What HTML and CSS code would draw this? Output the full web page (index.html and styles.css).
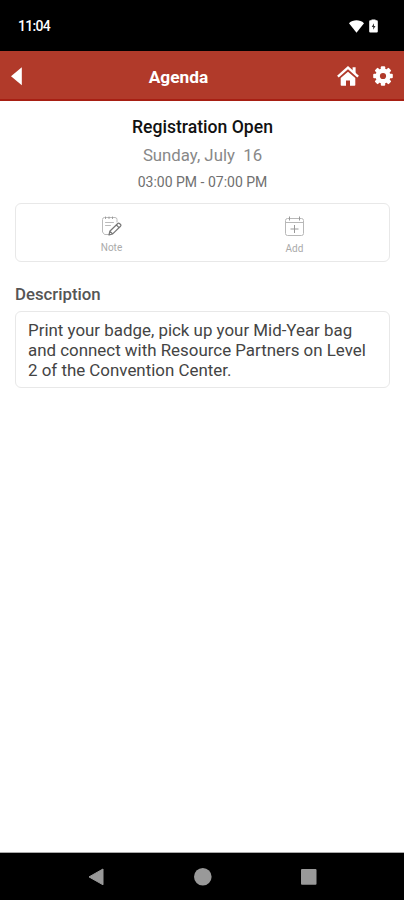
FILE: index.html
```html
<!DOCTYPE html>
<html lang="en">
<head>
  <meta charset="UTF-8" />
  <meta name="viewport" content="width=device-width, initial-scale=1.0" />
  <title>Agenda</title>
  <link rel="stylesheet" href="styles.css">
</head>
<body>
  <div class="status-bar">
    <span class="clock">11:04</span>
    <svg class="wifi" width="15" height="13" viewBox="0 0 15 13"><path d="M0 3.2C4.2-.6 10.8-.6 15 3.2L7.5 12.7z" fill="#fff"/></svg>
    <svg class="battery" width="9" height="14" viewBox="0 0 9 14"><path d="M2.5 1.3V.5h4v.8h1.2q1.1 0 1.1 1.1v10q0 1.1-1.1 1.1H1.3Q.2 13.5.2 12.4v-10q0-1.1 1.1-1.1z" fill="#fff"/><path d="M5 4.2 2.7 8h1.500v2.800L6.500 7H5z" fill="#333"/></svg>
  </div>

  <header class="header">
    <svg class="back" width="12" height="20" viewBox="0 0 12 20"><path d="M11.8 1.3v18L1 10.3z" fill="#fff"/></svg>
    <h1>Agenda</h1>
    <svg class="home" width="22" height="20" viewBox="0 0 22 20">
      <path d="M11 5.800 18.300 12V19q0 .8-.8.8H13v-5.300H9v5.300H4.500q-.8 0-.8-.8v-7z" fill="#fff"/>
      <path d="M.9 10.700 11 1.700l10.100 9" fill="none" stroke="#fff" stroke-width="2.400"/>
      <path d="M15.600 1.200h3v7l-3-2.700z" fill="#fff"/>
    </svg>
    <svg class="gear" width="20" height="20" viewBox="-10 -10 20 20">
      <g fill="#fff">
        <rect x="-2.200" y="-9.800" width="4.400" height="19.600" rx="1"/>
        <rect x="-2.200" y="-9.800" width="4.400" height="19.600" rx="1" transform="rotate(45)"/>
        <rect x="-2.200" y="-9.800" width="4.400" height="19.600" rx="1" transform="rotate(90)"/>
        <rect x="-2.200" y="-9.800" width="4.400" height="19.600" rx="1" transform="rotate(135)"/>
        <circle r="7.500"/>
      </g>
      <circle r="3.100" fill="#b13a2a"/>
    </svg>
  </header>

  <main class="content">
    <h2 class="title">Registration Open</h2>
    <p class="date">Sunday, July&nbsp; 16</p>
    <p class="time">03:00 PM - 07:00 PM</p>

    <div class="actions">
      <div class="action note">
        <svg width="21" height="21" viewBox="0 0 21 21" fill="none" stroke-linecap="round" stroke-linejoin="round">
          <path d="M8 18.500H3.500L1.500 16V3.500q0-2 2-2h10.500q2 0 2 2V6" stroke="#bbb"/>
          <path d="M4.500 1v1.500M8 1v1.500M11.500 1v1.500" stroke="#999"/>
          <path d="M4.500 6.500h8M4.500 9.500h5" stroke="#bbb"/>
          <path d="m8 19 .8-3.700 8-7.800q.8-.8 1.700 0l1 1q.8.8 0 1.700l-7.800 7.700zM15.400 9l2.600 2.600M8.800 15.300l2.900 2.600" stroke="#777" stroke-width="1.200"/>
        </svg>
        <span>Note</span>
      </div>
      <div class="action add">
        <svg width="21" height="21" viewBox="0 0 21 21" fill="none" stroke="#b8b8b8">
          <rect x="1.500" y="2.500" width="18" height="17" rx="2"/>
          <path d="M1.500 6.500h18"/>
          <path d="M5.500.5v4M15.500.5v4M10.500 9v8M6.500 13h8" stroke="#999"/>
        </svg>
        <span>Add</span>
      </div>
    </div>

    <h3 class="label">Description</h3>
    <div class="description">Print your badge, pick up your Mid-Year bag<br>and connect with Resource Partners on Level<br>2 of the Convention Center.</div>
  </main>

  <nav class="nav-bar">
    <svg width="18" height="20" viewBox="0 0 18 20"><path d="M16 2v15.800L2 9.900z" fill="#999" stroke="#999" stroke-linejoin="round"/></svg>
    <svg width="18" height="20" viewBox="0 0 18 20"><circle cx="8.800" cy="9.800" r="8.800" fill="#999"/></svg>
    <svg width="18" height="20" viewBox="0 0 18 20"><rect x="1" y="2" width="15.500" height="15.800" rx="1" fill="#999"/></svg>
  </nav>
</body>
</html>
```
FILE: styles.css
```css
* {
  box-sizing: border-box;
}
body {
  font-family: Roboto, sans-serif;
  background-color: #fff;
  margin: 0;
  height: 900px;
  display: flex;
  flex-direction: column;
}
h1, h2, h3, p {
  margin: 0;
}
svg {
  display: block;
  flex: none;
}
.status-bar {
  height: 51px;
  background: #000;
  color: #fff;
  display: flex;
  align-items: center;
  padding: 1px 26px 0 18px;
}
.clock {
  font-size: 14px;
  font-weight: 500;
  letter-spacing: -0.7px;
  margin-right: auto;
}
.battery {
  margin-left: 5px;
}
.header {
  height: 50px;
  background: #b13a2a;
  border-bottom: 2px solid #a71f13;
  color: #fff;
  display: flex;
  align-items: center;
  padding: 1px 11px 0 10px;
}
.header h1 {
  flex: 1;
  padding-top: 2px;
  margin-right: 23px;
  margin-left: 21px;
  font-size: 17.3px;
  font-weight: 700;
  text-align: center;
}
.gear {
  margin-left: 14px;
}
.content {
  flex: 1;
  padding: 15px 14px 0 15px;
}
.title {
  font-size: 17.6px;
  font-weight: 500;
  line-height: 22px;
  text-align: center;
  color: #111;
}
.date {
  margin-top: 6px;
  font-size: 16.8px;
  line-height: 22px;
  text-align: center;
  color: #888;
}
.time {
  margin-top: 6px;
  font-size: 14px;
  line-height: 20px;
  text-align: center;
  color: #707070;
}
.actions {
  display: flex;
  height: 59px;
  margin-top: 11px;
  padding: 0 3px 0 4px;
  border: 1px solid #e8e8e8;
  border-radius: 6px;
}
.action {
  flex: 1;
  display: flex;
  flex-direction: column;
  align-items: center;
  padding-top: 12px;
  font-size: 10px;
  line-height: 12px;
  color: #aaa;
}
.action span {
  margin-top: 5px;
}
.add span {
  margin-top: 6px;
}
.label {
  margin-top: 21px;
  font-size: 16.8px;
  font-weight: 500;
  line-height: 22px;
  color: #555;
}
.description {
  height: 77px;
  margin-top: 6px;
  padding: 8px 12px;
  border: 1px solid #e8e8e8;
  border-radius: 6px;
  font-size: 16.9px;
  line-height: 20px;
  white-space: nowrap;
  color: #444;
}
.nav-bar {
  height: 48px;
  background: #000;
  border-top: 1px solid #aaa;
  display: flex;
  justify-content: space-between;
  align-items: center;
  padding: 0 86px 0 87px;
}
```
